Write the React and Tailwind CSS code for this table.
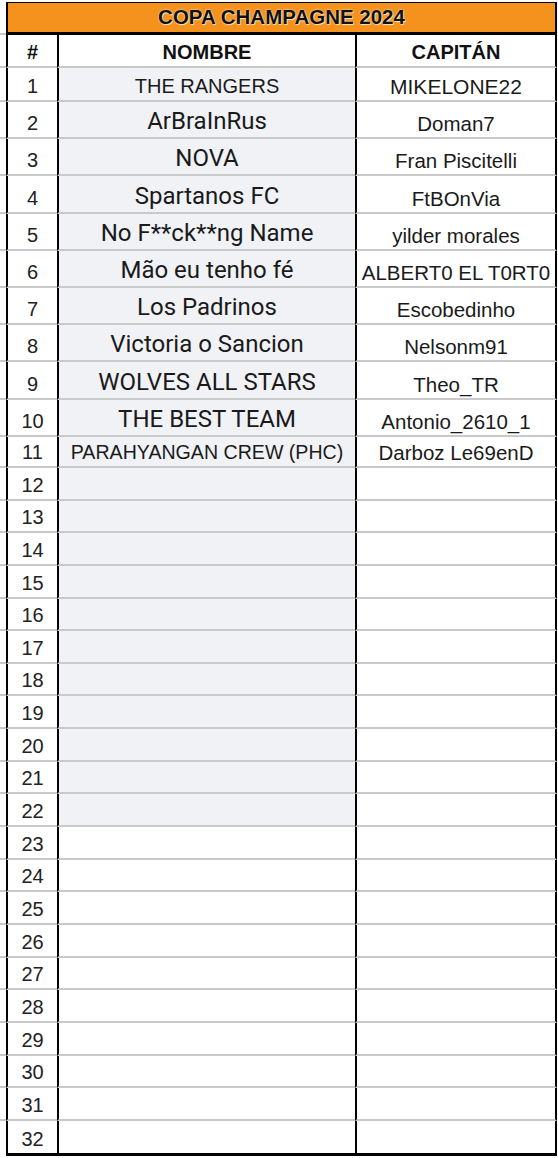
const teams = [
  { name: "THE RANGERS", captain: "MIKELONE22", h: "h-[34px]", nameFont: "arial", captainSize: "text-[21px]" },
  { name: "ArBraInRus", captain: "Doman7", h: "h-[37px]" },
  { name: "NOVA", captain: "Fran Piscitelli", h: "h-[37px]" },
  { name: "Spartanos FC", captain: "FtBOnVia", h: "h-[38px]" },
  { name: "No F**ck**ng Name", captain: "yilder morales", h: "h-[37px]" },
  { name: "Mão eu tenho fé", captain: "ALBERT0 EL T0RT0", h: "h-[37px]" },
  { name: "Los Padrinos", captain: "Escobedinho", h: "h-[37px]" },
  { name: "Victoria o Sancion", captain: "Nelsonm91", h: "h-[37px]" },
  { name: "WOLVES ALL STARS", captain: "Theo_TR", h: "h-[38px]" },
  { name: "THE BEST TEAM", captain: "Antonio_2610_1", h: "h-[37px]" },
  { name: "PARAHYANGAN CREW (PHC)", captain: "Darboz Le69enD", h: "h-[31px]", nameFont: "arial-sm" },
];

const rows = Array.from({ length: 32 }, (_, i) => {
  const team = teams[i];
  return {
    num: i + 1,
    name: team?.name || "",
    captain: team?.captain || "",
    h: team?.h || (i === 31 ? "h-[35px]" : "h-[32.65px]"),
    nameFont: team?.nameFont || "roboto",
    captainSize: team?.captainSize || "text-[20.5px]",
    tinted: i < 22,
    last: i === 31,
  };
});

const arial = "font-['Liberation_Sans',Arial,sans-serif]";
const roboto = "font-['Roboto',sans-serif]";

const nameFonts = {
  arial: `${arial} text-[20px] leading-[23px]`,
  "arial-sm": `${arial} text-[19.6px] leading-[23px]`,
  roboto: `${roboto} text-[24px] leading-[28px]`,
};

function Row({ row }) {
  const line = row.last
    ? "border-b-[3px] border-b-black"
    : "border-b-2 border-b-[#c9c9c9]";

  return (
    <div className={`flex ${row.h}`}>
      <div
        className={`w-[6px] shrink-0 ${
          row.last ? "" : "border-b-2 border-b-[#c9c9c9]"
        }`}
      />
      <div
        className={`flex w-[51px] shrink-0 items-end justify-center border-l-2 border-l-black bg-white pb-[2px] ${arial} text-[20px] leading-[23px] text-[#222] ${line}`}
      >
        {row.num}
      </div>
      <div
        className={`flex w-[298px] shrink-0 items-end justify-center whitespace-nowrap border-l-2 border-l-black pb-[2px] text-[#1a1a1a] ${nameFonts[row.nameFont]} ${line} ${
          row.tinted ? "bg-[#f0f2f6]" : "bg-white"
        }`}
      >
        {row.name}
      </div>
      <div
        className={`flex w-[202px] shrink-0 items-end justify-center whitespace-nowrap border-x-2 border-x-black bg-white pb-[2px] ${arial} ${row.captainSize} leading-[23px] text-[#1a1a1a] ${line}`}
      >
        {row.captain}
      </div>
    </div>
  );
}

export default function App() {
  return (
    <div className="h-[1158px] w-[558px] overflow-hidden bg-white">
      <div className="flex pt-[2px]">
        <div className="w-[6px] shrink-0 border-b-2 border-b-[#c9c9c9]" />
        <div
          className={`flex h-[33px] w-[551px] items-center justify-center border-x-2 border-t-[1px] border-b-[3px] border-black bg-[#f5921e] ${arial} text-[20.5px] font-bold text-[#111] [text-shadow:0_0_2px_#fff1d6,1px_1px_0_#fbd6a0]`}
        >
          COPA CHAMPAGNE 2024
        </div>
      </div>

      <div className="flex h-[33px]">
        <div className="w-[6px] shrink-0 border-b-2 border-b-[#c9c9c9]" />
        <div
          className={`flex w-[51px] shrink-0 items-end justify-center border-b-2 border-l-2 border-b-[#c9c9c9] border-l-black pb-[2px] ${arial} text-[20px] font-bold leading-[23px] text-[#111]`}
        >
          #
        </div>
        <div
          className={`flex w-[298px] shrink-0 items-end justify-center border-b-2 border-l-2 border-b-[#c9c9c9] border-l-black pb-[2px] ${arial} text-[20px] font-bold leading-[23px] text-[#111]`}
        >
          NOMBRE
        </div>
        <div
          className={`flex w-[202px] shrink-0 items-end justify-center border-x-2 border-b-2 border-x-black border-b-[#c9c9c9] pb-[2px] ${arial} text-[20px] font-bold leading-[23px] text-[#111]`}
        >
          CAPITÁN
        </div>
      </div>

      {rows.map((row) => (
        <Row key={row.num} row={row} />
      ))}
    </div>
  );
}
